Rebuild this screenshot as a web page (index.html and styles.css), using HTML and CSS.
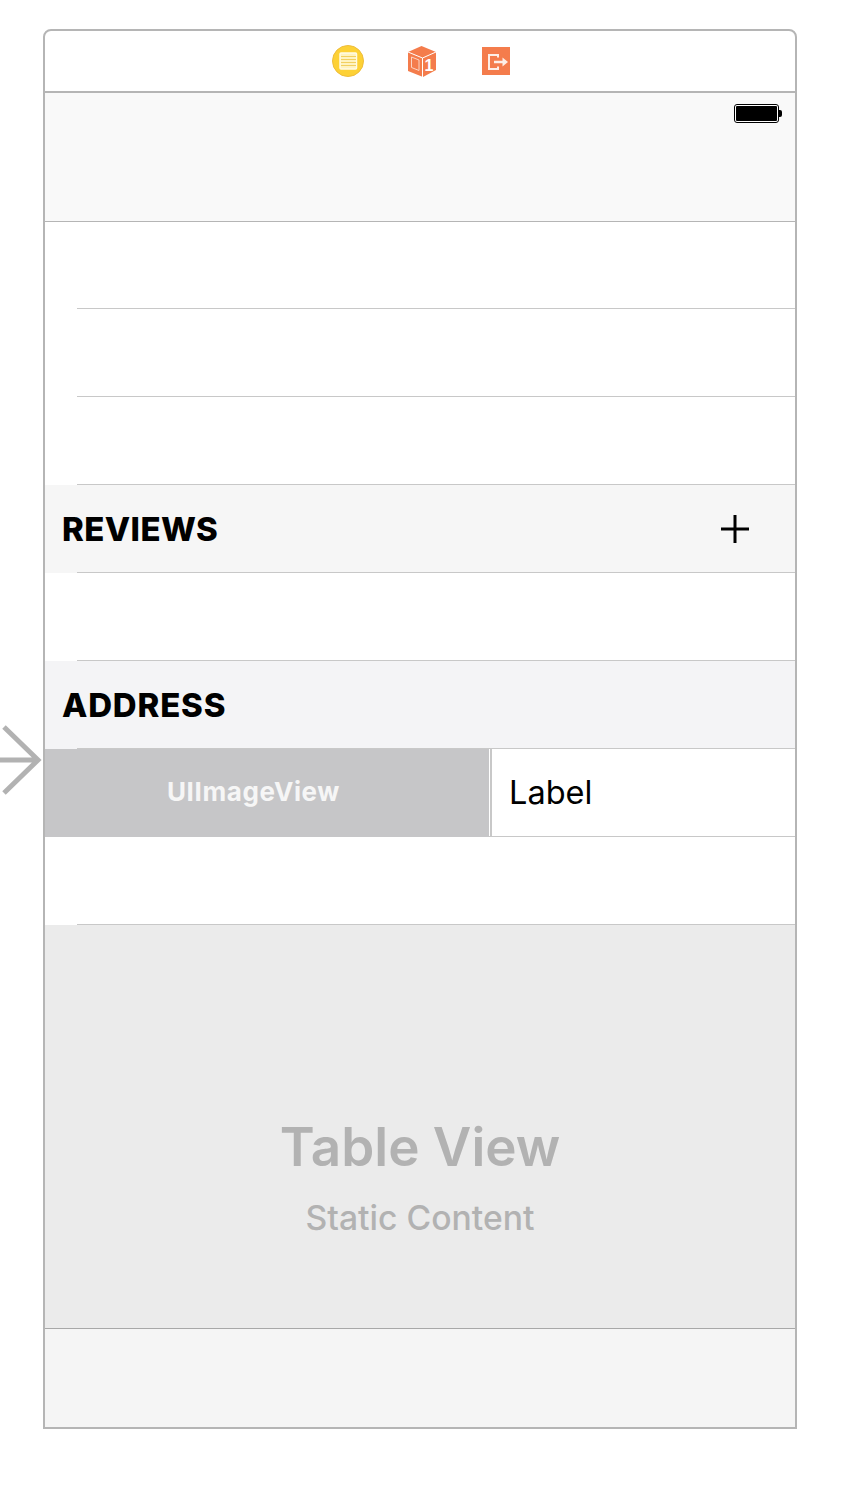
FILE: index.html
```html
<!DOCTYPE html>
<html>
<head>
  <meta charset="utf-8">
  <title>Table View Controller</title>
  <link rel="stylesheet" href="styles.css">
</head>
<body>
  <svg class="entry-arrow" width="42" height="72" viewBox="0 0 42 72">
    <path d="M0 36H37M4 3L38 36L4 69" fill="none" stroke="#b2b2b2" stroke-width="5"/>
  </svg>
  <div class="scene">
    <div class="toolbar">
      <svg width="32" height="32" viewBox="0 0 32 32">
        <circle cx="16" cy="16" r="15.5" fill="#fdd135" stroke="#eebd3c"/>
        <rect x="8" y="8" width="16.5" height="16" rx="1" fill="#fff3c0" stroke="#fffbe6" stroke-width="1.5"/>
        <path d="M9 11.5H24M9 14.5H24M9 17.5H24M9 20.5H24" stroke="#f2d060" stroke-width="1"/>
      </svg>
      <svg width="32" height="32" viewBox="0 0 32 32">
        <path d="M15.5 1L30 7V25L17 32L2 26V7Z" fill="#f47c4c"/>
        <path d="M2 7L16.5 13L30 7M16.5 13V32" fill="none" stroke="#fff" stroke-width="1"/>
        <path d="M5.5 12L13 15V25.5L5.5 22.5Z" fill="none" stroke="#fbd5c4" stroke-width="1"/>
        <text x="23" y="25.5" class="cube-num">1</text>
      </svg>
      <svg width="32" height="32" viewBox="-2 -2 32 32">
        <rect width="28" height="28" fill="#f47c4c"/>
        <path d="M16 10.5V8H7V22H16V19.5" fill="none" stroke="#fdeee6" stroke-width="2"/>
        <path d="M12 15H21" stroke="#fdeee6" stroke-width="2.5"/>
        <path d="M20.5 10.5L26 15L20.5 19.5Z" fill="#fdeee6"/>
      </svg>
    </div>
    <div class="navbar">
      <div class="battery"><span class="battery-fill"></span></div>
      <span class="battery-cap"></span>
    </div>
    <div class="row first"><div class="cell"></div><div class="sep"></div></div>
    <div class="row"><div class="cell"></div><div class="sep"></div></div>
    <div class="row"><div class="cell"></div><div class="sep"></div></div>
    <div class="row reviews">
      <div class="cell">
        <span class="heading">REVIEWS</span>
        <svg class="plus" width="28" height="28" viewBox="0 0 28 28">
          <path d="M14 0V28M0 14H28" stroke="#000" stroke-width="3"/>
        </svg>
      </div>
      <div class="sep"></div>
    </div>
    <div class="row"><div class="cell"></div><div class="sep"></div></div>
    <div class="row address">
      <div class="cell"><span class="heading">ADDRESS</span></div>
      <div class="sep"></div>
    </div>
    <div class="row">
      <div class="cell split">
        <div class="image-view">UIImageView</div>
        <div class="label">Label</div>
      </div>
      <div class="sep"></div>
    </div>
    <div class="row"><div class="cell"></div><div class="sep"></div></div>
    <div class="placeholder">
      <div class="placeholder-title">Table View</div>
      <div class="placeholder-sub">Static Content</div>
    </div>
    <div class="tabbar"></div>
  </div>
</body>
</html>
```

FILE: styles.css
```css
html, body {
  margin: 0;
  background: #fff;
}
body {
  height: 1498px;
  position: relative;
  overflow: hidden;
  font-family: Inter, "Noto Sans", sans-serif;
  color: #000;
}
.entry-arrow {
  position: absolute;
  left: 0;
  top: 724px;
}
.scene {
  box-sizing: border-box;
  width: 754px;
  height: 1400px;
  margin: 29px 0 0 43px;
  border: 2px solid #b5b5b5;
  border-radius: 8px 8px 0 0;
  display: flex;
  flex-direction: column;
}
.toolbar {
  height: 60px;
  flex: none;
  border-bottom: 2px solid #b5b5b5;
  display: flex;
  align-items: center;
  justify-content: center;
  gap: 42px;
  padding-left: 4px;
}
.cube-num {
  font: bold 16px "Liberation Sans", sans-serif;
  fill: #fff;
  text-anchor: middle;
}
.navbar {
  box-sizing: border-box;
  height: 129px;
  flex: none;
  background: #f9f9f9;
  border-bottom: 1px solid #b5b5b5;
  display: flex;
  justify-content: flex-end;
  align-items: flex-start;
  padding: 11px 13px 0 0;
}
.battery {
  box-sizing: border-box;
  width: 45px;
  height: 19px;
  border: 1px solid #000;
  border-radius: 3px;
  padding: 1px;
  background: #fff;
}
.battery-fill {
  display: block;
  height: 100%;
  background: #000;
  border-radius: 1px;
}
.battery-cap {
  width: 3px;
  height: 7px;
  margin-top: 6px;
  background: #000;
  border-radius: 0 2px 2px 0;
}
.row {
  height: 88px;
  flex: none;
  display: flex;
  flex-direction: column;
}
.row.first {
  height: 87px;
}
.cell {
  flex: 1;
  display: flex;
  align-items: center;
  justify-content: space-between;
  padding: 0 46px 0 17px;
  min-height: 0;
}
.sep {
  height: 1px;
  flex: none;
  margin-left: 32px;
  background: #c8c8c8;
}
.reviews {
  background: #f6f6f6;
}
.address {
  background: #f4f4f6;
}
.heading {
  font-size: 33px;
  font-weight: 800;
  letter-spacing: 0.4px;
}
.address .heading {
  letter-spacing: 0.8px;
}
.split {
  padding: 0;
  align-items: stretch;
}
.image-view {
  box-sizing: border-box;
  width: 444px;
  flex: none;
  position: relative;
  margin-bottom: -1px;
  background: #c6c6c8;
  padding: 0 27px 4px 0;
  color: #f6f6f6;
  font-size: 26px;
  font-weight: 700;
  letter-spacing: 0.6px;
  display: flex;
  align-items: center;
  justify-content: center;
}
.label {
  flex: 1;
  margin-left: 1px;
  border-left: 2px solid #c8c8c8;
  padding-left: 17px;
  font-size: 32.5px;
  line-height: 88px;
}
.placeholder {
  height: 403px;
  flex: none;
  background: #ebebeb;
  border-bottom: 1px solid #a8a8a8;
  display: flex;
  flex-direction: column;
  align-items: center;
  color: #b2b2b2;
}
.placeholder-title {
  margin-top: 190px;
  font-size: 53px;
  line-height: 64px;
  font-weight: 600;
}
.placeholder-sub {
  margin-top: 18px;
  font-size: 33.7px;
  line-height: 42px;
  font-weight: 500;
}
.tabbar {
  flex: 1;
  background: #f5f5f5;
}
```
